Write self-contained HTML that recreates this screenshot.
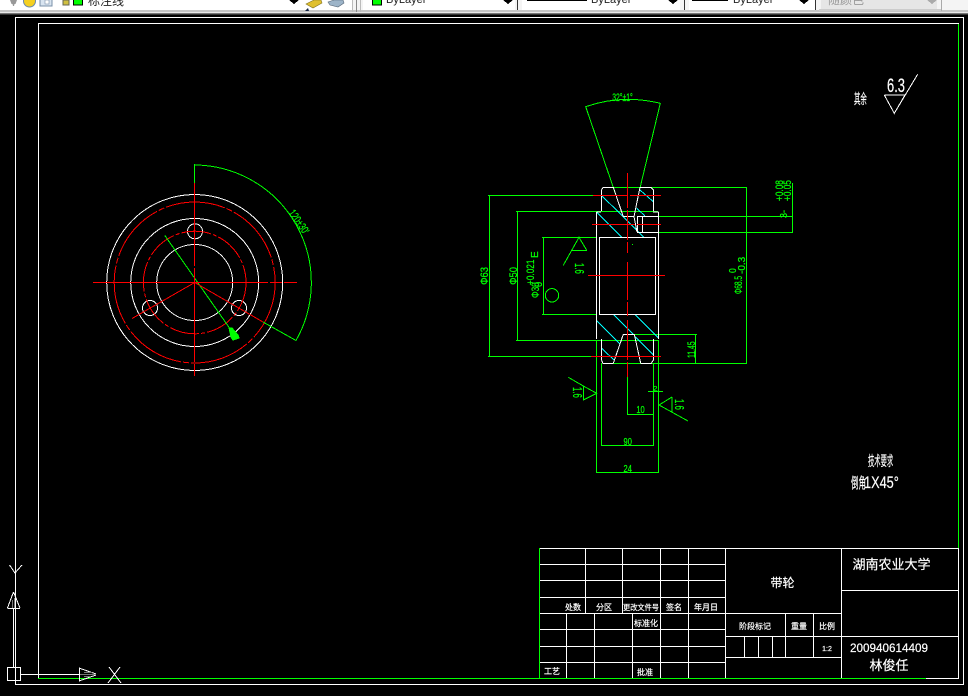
<!DOCTYPE html>
<html><head><meta charset="utf-8"><style>
html,body{margin:0;padding:0;background:#000;width:968px;height:696px;overflow:hidden}
svg{display:block}
text{font-family:"Liberation Sans","Noto Sans CJK SC",sans-serif}
.g text{fill:#0f0;stroke:#0f0;stroke-width:.25}
.n text{stroke:#fff;stroke-width:.2}
</style></head><body>
<svg width="968" height="696" viewBox="0 0 968 696" xmlns="http://www.w3.org/2000/svg" shape-rendering="crispEdges">
<rect width="968" height="696" fill="#000"/>
<!-- toolbar -->
<rect width="968" height="10" fill="#f4f4f4"/>
<rect y="10" width="968" height="2" fill="#c4c4c4"/>
<rect y="12" width="968" height="1" fill="#e8e8e8"/>
<rect y="13" width="968" height="1" fill="#777"/>
<rect y="14" width="968" height="1" fill="#333"/>
<rect x="0" y="0" width="352" height="10" fill="#fff"/>
<rect x="363" y="0" width="152" height="10" fill="#fff"/>
<rect x="522" y="0" width="158" height="10" fill="#fff"/>
<rect x="689" y="0" width="126" height="10" fill="#fff"/>
<rect x="821" y="0" width="116" height="9" fill="#e6e6e6"/>
<rect x="819" y="9" width="123" height="2" fill="#ccc"/>
<rect x="941" y="0" width="1" height="11" fill="#aaa"/>
<rect x="352" y="0" width="1" height="12" fill="#bbb"/><rect x="356" y="0" width="1" height="12" fill="#888"/><rect x="360" y="0" width="1" height="12" fill="#bbb"/>
<rect x="517" y="0" width="1" height="10" fill="#333"/><rect x="684" y="0" width="1" height="10" fill="#333"/><rect x="815" y="0" width="1" height="10" fill="#333"/>
<g shape-rendering="auto">
<path d="M10 0h7l-1.500 4h-1l-.5 2h-1l-.5-2h-1z" fill="#999"/>
<circle cx="29.500" cy="1" r="6" fill="#f5d020" stroke="#6a88a8"/>
<rect x="40" y="-2" width="12" height="8" fill="#d8e4f0" stroke="#7a90a8"/>
<rect x="45" y="0" width="4" height="4" fill="#fff" stroke="#7a90a8" stroke-width=".6"/>
<rect x="63" y="0" width="6" height="5" fill="#d0c040" stroke="#665"/>
<path d="M306 4l8-4h7l1 3-9 5z" fill="#e0c030" stroke="#807020" stroke-width=".6"/>
<path d="M305 11l3-3 1 3z" fill="#124"/>
<path d="M328 2l6-2h9l1 3-6 4-8-2z" fill="#9db4c8" stroke="#567" stroke-width=".6"/>
</g>
<rect x="73.500" y="-1" width="9" height="6" fill="#0f0" stroke="#000"/>
<text x="88" y="5" font-size="12" fill="#222">标注线</text>
<path d="M289 0h10l-5 4z" fill="#000"/>
<rect x="372.500" y="-1" width="9" height="6" fill="#0f0" stroke="#000"/>
<text x="386" y="3" font-size="11" fill="#222">ByLayer</text>
<path d="M503 0h10l-5 4z" fill="#000"/>
<rect x="527" y="0" width="60" height="1" fill="#000"/>
<text x="591" y="3" font-size="11" fill="#222">ByLayer</text>
<path d="M668 0h10l-5 4z" fill="#000"/>
<rect x="692" y="0" width="36" height="1" fill="#000"/>
<text x="733" y="3" font-size="11" fill="#222">ByLayer</text>
<path d="M799 0h10l-5 4z" fill="#000"/>
<text x="828" y="4" font-size="12" fill="#999">随颜色</text>
<path d="M927 0h10l-5 4z" fill="#aaa"/>

<g fill="none" stroke-width="1">
<!-- frames -->
<path d="M15.500 684.500V17.500H963.500V684.500Z" stroke="#fff"/>
<path d="M38.500 678V23.500H959" stroke="#fff"/>
<path d="M958.500 24V548" stroke="#0f0"/>
<path d="M958.500 548V678M926 678.500H959" stroke="#fff"/>
<path d="M38 678.500H926" stroke="#0f0"/>
<!-- title block -->
<path stroke="#0f0" d="M539.500 548V678"/>
<path stroke="#fff" d="M540 548.500H959M540 564.500H725M540 580.500H725M540 597.500H725M540 613.500H841M540 629.500H725M540 646.500H725M540 662.500H725
M585.500 548V613M622.500 548V613M660.500 548V678M688.500 548V678M725.500 548V678
M566.500 613V678M594.500 613V678M632.500 613V678
M841.500 548V678M841 590.500H959M725 636.500H959M725 657.500H841
M744.500 636V657M758.500 636V657M772.500 636V657M785.500 613V657M813.500 613V657"/>
<!-- UCS -->
<g stroke="#fff">
<rect x="7.500" y="667.500" width="13" height="13"/>
<path d="M13.500 667V608M20 674.500H79M7.500 608.500H20M13.500 592L7.500 608M13.500 592L20 608M79.500 668V681M79 668L96 674M79 681L96 675"/>
<path d="M9.500 565L15 573L22 565M109 667L121 683M120 667L108 683"/>
</g>
<path stroke="#777" d="M12.500 600V608M14.500 598V608M84 672.500H92M84 676.500H90M80 674.500H96"/>

<!-- left view -->
<circle cx="194.700" cy="282.500" r="88" stroke="#fff"/>
<circle cx="194.700" cy="282.500" r="64" stroke="#fff"/>
<circle cx="194.700" cy="282.500" r="38" stroke="#fff"/>
<circle cx="195" cy="231.300" r="7.500" stroke="#fff"/>
<circle cx="150" cy="308" r="7.500" stroke="#fff"/>
<circle cx="239" cy="308" r="7.500" stroke="#fff"/>
<circle cx="194.700" cy="282.500" r="80.500" stroke="#f00" stroke-dasharray="60 2 6 2"/>
<circle cx="194.700" cy="282.500" r="51.300" stroke="#f00" stroke-dasharray="30 2 4 2"/>
<path stroke="#0f0" d="M194.700 165A117.500 117.500 0 0 1 296 340.500L263 322"/>
<path stroke="#0f0" d="M164.700 235.300L233 333"/>
<path stroke="#f00" d="M194.700 282.500L132 318.500M194.700 282.500L263 322"/>
<path stroke="#0f0" d="M194.500 164V183"/>
<path stroke="#f00" d="M93 282.500H268M270 282.500H282M284 282.500H297M194.500 183V266M194.500 268V362M194.500 364V376"/>
<path stroke="#0f0" fill="#0f0" d="M229 328h3l6 7 1 3-6 2-2-3z"/>

<!-- section view: green dims -->
<path stroke="#0f0" d="M488 195.500H593M489.500 195V356M488 356.500H591M516 211.500H658M517.500 211V340M516 340.500H659
M542 237.500H597M543.500 237V314M542 314.500H597
M613 187.500H747M746.500 187V363M613 363.500H747M658 216.500H793M658 232.500H793M792.500 183V232
M634 334.500H697M695.500 334V363
M596.500 340V472M658.500 340V472M596 472.500H659
M601.500 363V445M653.500 363V445M601 445.500H654
M627.500 377V415M627 414.500H654
M571.700 250.500H587M648 391.500H663"/>
<g stroke="#0f0">
<path d="M623.300 216.700L585.700 106.700Q622 94 660.300 103.300L640 188"/>
<path d="M571.700 250.300L579 237.300L586.700 250.300M571.700 250.300L563.300 265.300"/>
<circle cx="552" cy="295.300" r="6.700"/>
<path d="M568.300 377.300L583.300 386V400L596.700 393.300L583.300 386"/>
<path d="M688 421L659 405L672 397"/>
<path d="M672 397V412"/>
</g>
<path stroke="#fff" d="M884.300 95H905L894.300 113.300L884.300 95M894.300 113.300L917.700 74.300"/>
<!-- section hatch -->
<g stroke="#0ff">
<path d="M601.700 195.700L623.300 216.700M640 190L653.300 201.700M636.700 208.300L645 216M596.700 212.300L622 237.300M623.300 216.700L644 237.300M596.700 320.700L620 344M613.300 314.300L634 335M635 314.300L658.700 338.300M635 336.700L653.300 355M601.700 348.300L614 360"/>
</g>
<!-- section white -->
<g stroke="#fff">
<path d="M601.500 211V190L603 187.500H613.500M640 187.500H651L653.500 190V211"/>
<path d="M596.500 212V339M658.500 212V339M596.500 212H601M653 212H658.500"/>
<path d="M599.500 237V314M655.500 237V314M599 237.500H656M599 314.500H656"/>
<path d="M637.500 216.500H658.500V232.500H637.500ZM642.500 216V232"/>
<path d="M623 216.500H634M623 334.500H634"/>
<path d="M601.500 339V360L603 363.500H613M641 363.500H651L653.500 360V339"/>
<path d="M613.300 187.300L623.300 216.700M640 187.300L634 216.700L637 232M613.300 363.300L623.300 334.300M640.700 363.300L634.300 334.300"/>
</g>
<path stroke="#f00" d="M627.500 173V208M627.500 210V240M627.500 242V253M627.500 262V300M627.500 302V316M627.500 320V360M627.500 362V377
M593 195.500H628M630 195.500H661M592 224.500H635M637 224.500H661M588 275.500H665M591 356.500H661"/>
</g>
<rect x="632" y="244" width="1" height="1" fill="#0f0"/>

<!-- dimension text -->
<g class="g" font-size="11">
<text text-anchor="middle" transform="translate(296,224) rotate(55) scale(.7,1)">120±30'</text>
<text text-anchor="middle" transform="translate(622.500,101) scale(.62,1)">32°±1°</text>
<text text-anchor="middle" transform="translate(488,276) rotate(-90) scale(.85,1)">Φ63</text>
<text text-anchor="middle" transform="translate(517,276) rotate(-90) scale(.85,1)">Φ50</text>
<text transform="translate(539,298) rotate(-90) scale(.75,1)">Φ30</text>
<text transform="translate(534,285) rotate(-90) scale(.75,1)">+0.021</text>
<text transform="translate(542,287) rotate(-90) scale(.85,1)">0</text>
<text font-size="10" transform="translate(538,258) rotate(-90)">E</text>
<text font-size="13" transform="translate(575,263) rotate(90) scale(.6,1)">1.6</text>
<text font-size="13" transform="translate(573,387) rotate(90) scale(.6,1)">1.6</text>
<text font-size="13" transform="translate(675,399) rotate(90) scale(.6,1)">1.6</text>
<text font-size="9" transform="translate(653,391) scale(.9,.8)">2</text>
<text font-size="10" text-anchor="middle" transform="translate(640.500,413) scale(.75,1)">10</text>
<text font-size="10" text-anchor="middle" transform="translate(627.700,445) scale(.75,1)">90</text>
<text font-size="10" text-anchor="middle" transform="translate(627.700,472) scale(.75,1)">24</text>
<text transform="translate(695,358) rotate(-90) scale(.62,1)">11.45</text>
<text transform="translate(742,294) rotate(-90) scale(.6,1)">Φ68.5</text>
<text font-size="10" transform="translate(736,273) rotate(-90) scale(.85,1)">0</text>
<text font-size="10" transform="translate(745,274) rotate(-90)">-0.3</text>
<text transform="translate(783,201) rotate(-90) scale(.75,1)">+0.08</text>
<text transform="translate(791,201) rotate(-90) scale(.75,1)">+0.05</text>
<text font-size="10" transform="translate(787,218) rotate(-90) scale(.9,1)">3-</text>
</g>

<!-- notes -->
<g fill="#fff" class="n">
<text font-size="19" text-anchor="middle" transform="translate(896,92) scale(.68,1)">6.3</text>
<text font-size="14" transform="translate(854,104) scale(.46,1)">其余</text>
<text font-size="14" transform="translate(868,466) scale(.45,1)">技术要求</text>
<text font-size="15" transform="translate(851,488) scale(.5,1)">倒角</text>
<text font-size="17" transform="translate(864,488) scale(.75,1)">1X45°</text>

<text x="891.500" y="569" font-size="13" text-anchor="middle">湖南农业大学</text>
<text x="782.500" y="587" font-size="12" text-anchor="middle">带轮</text>
<text x="889" y="652" font-size="11.700" text-anchor="middle">200940614409</text>
<text x="889" y="670" font-size="13" text-anchor="middle">林俊任</text>
<g font-size="8" text-anchor="middle">
<text x="573" y="610">处数</text>
<text x="604" y="610">分区</text>
<text x="641" y="610" font-size="7.200">更改文件号</text>
<text x="674" y="610">签名</text>
<text x="706" y="610">年月日</text>
<text x="646" y="626">标准化</text>
<text x="552" y="674">工艺</text>
<text x="645" y="675">批准</text>
<text x="755" y="629">阶段标记</text>
<text x="799" y="629">重量</text>
<text x="827" y="629">比例</text>
<text x="827" y="651" font-size="7">1:2</text>
</g>
</g>
</svg>
</body></html>
